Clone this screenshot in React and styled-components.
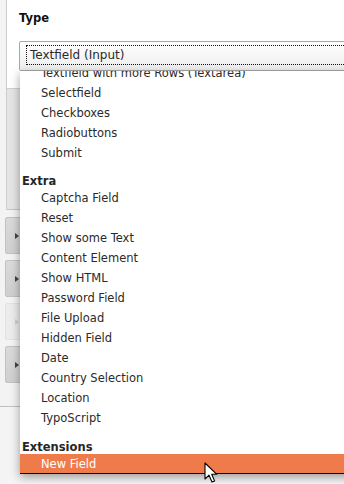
import React from 'react';
import styled, { createGlobalStyle } from 'styled-components';

const GlobalStyle = createGlobalStyle`
body{
  margin:0;
  background:#f3f3f3;
  font-family:"DejaVu Sans", Verdana, sans-serif;
  color:#333;
}
`

const groups = [
  { label: 'Standard', items: ['Textfield (Input)', 'Textfield with more Rows (Textarea)', 'Selectfield', 'Checkboxes', 'Radiobuttons', 'Submit'] },
  { label: 'Extra', items: ['Captcha Field', 'Reset', 'Show some Text', 'Content Element', 'Show HTML', 'Password Field', 'File Upload', 'Hidden Field', 'Date', 'Country Selection', 'Location', 'TypoScript'] },
  { label: 'Extensions', items: ['New Field'] },
]

const toggles = [false, false, true, false]

function App(){
  return(
    <Page>
      <GlobalStyle/>
      <Panel>
        <FieldBlock>
          <Label>Type</Label>
          <Select>
            <Focus>Textfield (Input)</Focus>
          </Select>
        </FieldBlock>
        <SubPanel/>
      </Panel>
      <ToggleStack>
        {toggles.map((disabled, i) => (
          <Toggle key={i} $disabled={disabled}><Arrow $disabled={disabled}/></Toggle>
        ))}
      </ToggleStack>
      <Footer/>

      <Dropdown>
        <Scroller>
          {groups.map(g => (
            <React.Fragment key={g.label}>
              <GroupLabel $tall={g.label === 'Extensions'}>{g.label}</GroupLabel>
              {g.items.map(item => (
                <Option key={item} $selected={item === 'New Field'}>{item}</Option>
              ))}
            </React.Fragment>
          ))}
        </Scroller>
      </Dropdown>

      <Cursor width="14" height="22" viewBox="0 0 14 22">
        <path d="M1 1 L1 17 L5 13.2 L8 20 L10.6 18.9 L7.7 12.3 L12.8 12.3 Z" fill="#fff" stroke="#000" strokeWidth="1.1" strokeLinejoin="round"/>
      </Cursor>
    </Page>
  )
}

export default App

const Page = styled.div`
position:relative;
height:484px;
overflow:hidden;
background:#f3f3f3;
display:flex;
flex-direction:column;
`

const Panel = styled.div`
margin-left:6px;
border-left:1px solid #cdcdcd;
background:#fff;
`

const FieldBlock = styled.div`
height:89px;
box-sizing:border-box;
padding:11px 0 0 12px;
border-bottom:1px solid #cfcfcf;
`

const Label = styled.div`
font-weight:bold;
font-size:11.5px;
line-height:14px;
color:#111;
`

const Select = styled.div`
margin-top:16px;
height:30px;
box-sizing:border-box;
width:400px;
border:1px solid #a8a8a8;
border-radius:2px;
padding:3px 0 5px 6px;
background:linear-gradient(#ffffff, #ededed);
`

const Focus = styled.div`
height:20px;
box-sizing:border-box;
border:1px dotted #111;
border-right:none;
padding:1px 0 0 3px;
font-size:12px;
line-height:17px;
color:#2a2a2a;
`

const SubPanel = styled.div`
height:121px;
box-sizing:border-box;
background:linear-gradient(90deg, #e4e4e4, #efefef 40%);
border-bottom:1px solid #c4c4c4;
`

const ToggleStack = styled.div`
margin-top:7px;
padding-left:5px;
display:flex;
flex-direction:column;
gap:6px;
`

const Toggle = styled.div`
height:37px;
box-sizing:border-box;
border:1px solid ${p => p.$disabled ? '#e2e2e2' : '#c2c2c2'};
border-radius:2px;
background:${p => p.$disabled ? '#ececec' : 'linear-gradient(#dadada, #cfcfcf)'};
display:flex;
align-items:center;
padding-left:9px;
`

const Arrow = styled.span`
width:0;
height:0;
border-left:4px solid ${p => p.$disabled ? '#d2d2d2' : '#444'};
border-top:3.5px solid transparent;
border-bottom:3.5px solid transparent;
`

const Footer = styled.div`
margin-top:23px;
border-top:1px solid #c0c0c0;
flex:1;
background:#f4f4f4;
`

const Dropdown = styled.div`
position:absolute;
top:71px;
left:20px;
right:-20px;
height:403px;
box-sizing:border-box;
background:#fff;
border-bottom:1px solid #000;
box-shadow:0 3px 9px rgba(0,0,0,0.38);
overflow:hidden;
`

const Scroller = styled.div`
margin-top:-53px;
`

const GroupLabel = styled.div`
height:${p => p.$tall ? '26px' : '25px'};
box-sizing:border-box;
padding:${p => p.$tall ? '12px' : '11px'} 0 0 2px;
line-height:14px;
font-size:11.5px;
font-weight:bold;
color:#262626;
`

const Option = styled.div`
height:20px;
line-height:20px;
padding-left:21px;
font-size:11.5px;
color:${p => p.$selected ? '#fff' : '#2a2a2a'};
background:${p => p.$selected ? '#f07b4a' : 'transparent'};
white-space:nowrap;
`

const Cursor = styled.svg`
position:absolute;
left:204px;
top:462px;
`
